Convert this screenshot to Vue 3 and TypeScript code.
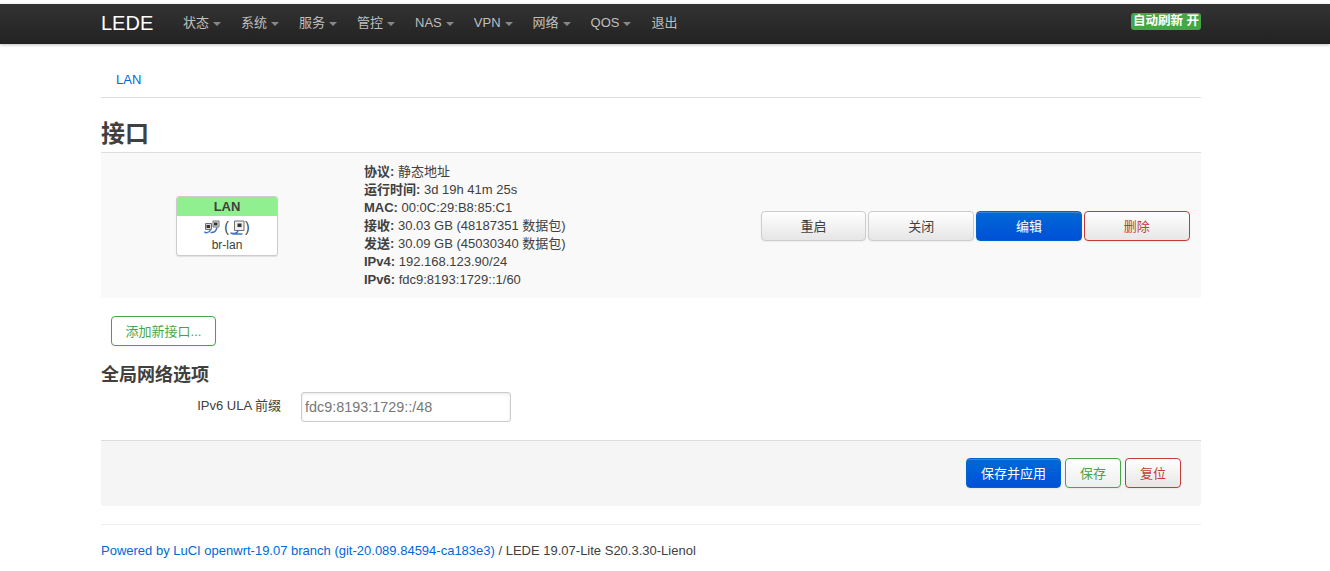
<script setup lang="ts">
const navItems: { label: string; caret: boolean }[] = [
  { label: '状态', caret: true },
  { label: '系统', caret: true },
  { label: '服务', caret: true },
  { label: '管控', caret: true },
  { label: 'NAS', caret: true },
  { label: 'VPN', caret: true },
  { label: '网络', caret: true },
  { label: 'QOS', caret: true },
  { label: '退出', caret: false },
]
const info: [string, string][] = [
  ['协议:', '静态地址'],
  ['运行时间:', '3d 19h 41m 25s'],
  ['MAC:', '00:0C:29:B8:85:C1'],
  ['接收:', '30.03 GB (48187351 数据包)'],
  ['发送:', '30.09 GB (45030340 数据包)'],
  ['IPv4:', '192.168.123.90/24'],
  ['IPv6:', 'fdc9:8193:1729::1/60'],
]
</script>

<template>
  <div class="page">
    <header class="navbar">
      <div class="nav-inner">
        <a class="brand">LEDE</a>
        <ul class="menu">
          <li v-for="n in navItems" :key="n.label" class="menu-item">
            <span class="menu-text">{{ n.label }}</span><span v-if="n.caret" class="caret"></span>
          </li>
        </ul>
        <span class="refresh">自动刷新 开</span>
      </div>
    </header>

    <main class="container">
      <div class="tabs"><a class="tab">LAN</a></div>
      <h2 class="title">接口</h2>

      <section class="iface">
        <div class="iface-left">
          <div class="ifc-box">
            <div class="ifc-head">LAN</div>
            <div class="ifc-body">
              <div class="ifc-icons">
                <svg class="icon" width="16" height="14" viewBox="0 0 16 14">
                  <path d="M1.500 3.500h6v6h-6z" fill="#d8d8d8" stroke="#707070" />
                  <rect x="2.500" y="5" width="3.500" height="3" fill="#333" />
                  <path d="M9 1h6v6h-6z" fill="#e8e8e8" stroke="#707070" />
                  <rect x="10" y="2.500" width="3.500" height="3" fill="#333" />
                  <path d="M.5 11.500c.5 2 4.500 1.500 6-1.500M6.500 12.500c3 .4 5.500-1 6.500-5" fill="none" stroke="#3f78c0" stroke-width="1.500" />
                </svg>
                <span class="paren open">(</span>
                <svg class="icon" width="15" height="15" viewBox="0 0 15 15">
                  <path d="M4.500 1h9.500v9.500h-9.500z" fill="#eee" stroke="#707070" />
                  <rect x="7.500" y="3.500" width="4" height="3.500" fill="#333" />
                  <path d="M.5 13c3 1 7 .5 8-3M2.500 14h10" fill="none" stroke="#3f78c0" stroke-width="1.500" />
                </svg>
                <span class="paren">)</span>
              </div>
              <div class="ifc-name">br-lan</div>
            </div>
          </div>
        </div>
        <div class="iface-info">
          <div v-for="row in info" :key="row[0]" class="info-row"><strong>{{ row[0] }}</strong> {{ row[1] }}</div>
        </div>
        <div class="iface-actions">
          <button class="btn">重启</button>
          <button class="btn">关闭</button>
          <button class="btn primary">编辑</button>
          <button class="btn danger">删除</button>
        </div>
      </section>

      <div class="add-row"><button class="btn success add">添加新接口...</button></div>

      <h3 class="subtitle">全局网络选项</h3>
      <div class="field">
        <label class="field-label">IPv6 ULA 前缀</label>
        <input class="field-input" type="text" placeholder="fdc9:8193:1729::/48" />
      </div>

      <div class="action-bar">
        <button class="btn primary apply">保存并应用</button>
        <button class="btn success save">保存</button>
        <button class="btn danger save">复位</button>
      </div>

      <footer class="footer">
        <a class="link">Powered by LuCI openwrt-19.07 branch (git-20.089.84594-ca183e3)</a> / LEDE 19.07-Lite S20.3.30-Lienol
      </footer>
    </main>
  </div>
</template>

<style>
html, body { margin: 0; background: #fff; }
</style>

<style scoped>
.page {
  font-family: "Liberation Sans", "Noto Sans CJK SC", sans-serif;
  font-size: 13px;
  color: #404040;
  padding-top: 4px;
  height: 567px;
  overflow: hidden;
}
.navbar {
  height: 40px;
  background: linear-gradient(#333, #222);
  box-shadow: 0 1px 3px rgba(0, 0, 0, .25);
}
.nav-inner {
  width: 1100px;
  margin-left: 101px;
  height: 40px;
  display: flex;
  align-items: center;
}
.brand {
  color: #fff;
  font-size: 20px;
  width: 82px;
  flex: none;
  position: relative;
  top: -1px;
}
.menu {
  list-style: none;
  margin: 0;
  padding: 0;
  display: flex;
  flex: 1;
  color: #bfbfbf;
  font-size: 13px;
}
.menu-item {
  margin-right: 20px;
  white-space: nowrap;
  display: flex;
  align-items: center;
  height: 18px;
  line-height: 18px;
  position: relative;
  top: -1px;
}
.menu-text { display: block; height: 18px; overflow: hidden; }
.caret {
  display: block;
  margin-left: 4px;
  margin-top: 1px;
  width: 0;
  height: 0;
  border-left: 4px solid transparent;
  border-right: 4px solid transparent;
  border-top: 4px solid #888;
}
.refresh {
  background: #46a546;
  color: #fff;
  font-weight: bold;
  font-size: 12.500px;
  line-height: 17px;
  height: 17px;
  overflow: hidden;
  padding: 0 2px;
  border-radius: 3px;
  position: relative;
  top: -3px;
  white-space: nowrap;
}
.container { width: 1100px; margin-left: 101px; }
.tabs {
  height: 53px;
  border-bottom: 1px solid #ddd;
  display: flex;
  align-items: center;
  padding-left: 15px;
}
.tab { color: #0069d6; font-size: 13px; position: relative; top: 9px; }
.title {
  font-size: 24px;
  line-height: 36px;
  margin: 18px 0 0;
  height: 36px;
  color: #404040;
  font-weight: bold;
}
.iface {
  height: 145px;
  background: #f9f9f9;
  border-top: 1px solid #ddd;
  display: flex;
  align-items: center;
}
.iface-left { width: 252px; flex: none; display: flex; justify-content: center; }
.ifc-box {
  width: 100px;
  height: 58px;
  border: 1px solid #ccc;
  border-radius: 3px;
  background: #fff;
  overflow: hidden;
  box-shadow: 0 1px 1px rgba(0, 0, 0, .1);
  text-align: center;
}
.ifc-head {
  background: #90f090;
  font-weight: bold;
  font-size: 13px;
  height: 19px;
  line-height: 19px;
}
.ifc-body { font-size: 12px; }
.ifc-icons { display: flex; justify-content: center; align-items: center; height: 19px; margin-top: 2px; }
.icon { display: block; }
.paren { font-size: 14px; line-height: 16px; }
.paren.open { margin: 0 1px 0 4px; }
.ifc-name { line-height: 15px; margin-top: 1px; }
.iface-info {
  margin-left: 11px;
  width: 396.600px;
  flex: none;
  line-height: 18px;
  font-size: 13px;
  white-space: nowrap;
}
.iface-actions { display: flex; gap: 2px; }
.btn {
  font-family: inherit;
  font-size: 13px;
  height: 30px;
  box-sizing: border-box;
  border: 1px solid #ccc;
  border-radius: 4px;
  background: linear-gradient(#fff, #e6e6e6);
  color: #404040;
  padding: 0;
  width: 105.750px;
  box-shadow: inset 0 1px 0 rgba(255, 255, 255, .2), 0 1px 2px rgba(0, 0, 0, .05);
}
.btn.primary {
  background: linear-gradient(#0069d6, #0050d6);
  border-color: #0064cd;
  color: #fff;
}
.btn.danger { border-color: #c43c35; color: #c43c35; }
.btn.success { border-color: #46a546; color: #46a546; background: linear-gradient(#fff, #eee); }
.add-row { padding: 18px 0 0 10px; }
.btn.add { width: 105px; display: block; background: #fff; padding-bottom: 2px; }
.subtitle {
  font-size: 18px;
  line-height: 24px;
  margin: 17px 0 5px;
  color: #404040;
  font-weight: bold;
}
.field { display: flex; align-items: center; height: 30px; }
.field-label { width: 180px; text-align: right; padding-right: 20px; line-height: 18px; position: relative; top: -1px; }
.field-input {
  width: 210px;
  height: 30px;
  box-sizing: border-box;
  border: 1px solid #ccc;
  border-radius: 3px;
  padding: 0 3px;
  font-family: inherit;
  font-size: 14.400px;
  box-shadow: inset 0 1px 3px rgba(0, 0, 0, .1);
}
.field-input::placeholder { color: #777; opacity: 1; }
.action-bar {
  margin-top: 18px;
  background: #f5f5f5;
  border-top: 1px solid #ddd;
  border-radius: 0 0 3px 3px;
  display: flex;
  justify-content: flex-end;
  align-items: center;
  gap: 4px;
  padding-right: 20px;
  padding-bottom: 2px;
  box-sizing: border-box;
  height: 66px;
}
.btn.apply { width: 95px; }
.btn.save { width: 56px; }
.footer {
  margin-top: 18px;
  border-top: 1px solid #eee;
  padding-top: 17px;
  font-size: 13px;
  line-height: 17px;
  white-space: nowrap;
}
.link { color: #0069d6; }
</style>
